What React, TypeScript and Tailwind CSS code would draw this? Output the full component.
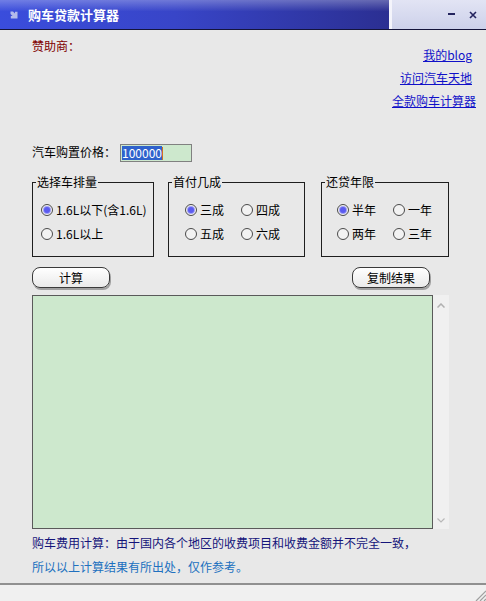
import React from 'react'

function Radio({ label, checked }: { label: string; checked?: boolean }) {
  return (
    <div className="flex h-[16px] items-center">
      <span className="flex h-[12px] w-[12px] shrink-0 items-center justify-center rounded-full border border-[#4a4a4a] bg-[#f2f2f2]">
        {checked && <span className="h-[6px] w-[6px] rounded-full bg-[#5b5bf0] ring-1 ring-[#a0a0f4]" />}
      </span>
      <span className="ml-[3px] whitespace-nowrap">{label}</span>
    </div>
  )
}

function Group({ title, className, children }: { title: string; className: string; children: React.ReactNode }) {
  return (
    <div className={`h-[75px] shrink-0 border border-[#1e1e1e] ${className}`}>
      <div className="-mt-[8px] ml-[3px] w-fit bg-[#e8e8e8] px-[1px] leading-[14px]">{title}</div>
      {children}
    </div>
  )
}

function Btn({ label }: { label: string }) {
  return (
    <button className="h-[21px] w-[78px] rounded-[8px] border border-[#3a3a3a] bg-gradient-to-b from-white to-[#eaeaea] leading-[18px] shadow-[1px_2px_0_#a0a0a0]">
      {label}
    </button>
  )
}

export default function App() {
  return (
    <div className="flex h-[601px] w-[486px] flex-col overflow-hidden bg-[#e8e8e8] font-['Noto_Sans_CJK_SC',sans-serif] text-[12px] leading-[16px] text-black">
      {/* title bar */}
      <div className="flex h-[30px] shrink-0 border-b border-[#14143a]">
        <div className="flex w-[389px] items-center bg-[linear-gradient(180deg,rgba(255,255,255,0.28)_0%,rgba(255,255,255,0)_40%),linear-gradient(90deg,#3a4ddc,#3845c8_45%,#2b2f92)]">
          <svg className="ml-[10px]" width="8" height="8" viewBox="0 0 8 8">
            <path d="M0.5 0.5 L3 0.5 L5 2.5 L5 0.8 L7.5 0.8 L7.5 7.5 L0.8 7.5 L0.8 5 L2.5 5 L0.5 3 Z" fill="#b4bbea" />
          </svg>
          <span className="ml-[10px] text-[13px] font-bold leading-[16px] text-white">购车贷款计算器</span>
        </div>
        <div className="flex flex-1 items-center justify-end border-l-[3px] border-[#f4f4fb] bg-gradient-to-b from-[#e2e4f4] to-[#cdd1ea] pr-[9px]">
          <svg width="8" height="3" viewBox="0 0 8 3" className="mr-[13px]">
            <rect x="0" y="0" width="7" height="2" fill="#24245e" />
          </svg>
          <svg width="8" height="8" viewBox="0 0 8 8">
            <path d="M1 1 L7 7 M7 1 L1 7" stroke="#24245e" strokeWidth="1.6" />
          </svg>
        </div>
      </div>

      {/* body */}
      <div className="flex flex-1 flex-col pl-[32px]">
        <div className="flex justify-between">
          <div className="pt-[8px] text-[#800000]">赞助商：</div>
          <div className="flex flex-col items-end gap-[7px] pt-[17px] text-[#1010c8] underline">
            <a className="mr-[14px]">我的blog</a>
            <a className="mr-[14px]">访问汽车天地</a>
            <a className="mr-[10px]">全款购车计算器</a>
          </div>
        </div>

        <div className="mt-[35px] flex h-[18px] items-center">
          <span className="pb-[2px]">汽车购置价格：</span>
          <div className="ml-[4px] flex h-[18px] w-[72px] items-center border border-[#808080] bg-[#cde8cd] pl-[1px]">
            <span className="bg-[#2f62cc] leading-[14px] text-white">100000</span>
            <span className="h-[13px] w-[1px] bg-[#d07020]" />
          </div>
        </div>

        <div className="mt-[20px] flex">
          <Group title="选择车排量" className="w-[122px]">
            <div className="mt-[13px] flex flex-col gap-[8px] pl-[8px]">
              <Radio label="1.6L以下(含1.6L)" checked />
              <Radio label="1.6L以上" />
            </div>
          </Group>
          <Group title="首付几成" className="ml-[14px] w-[137px]">
            <div className="mt-[13px] grid grid-cols-[56px_56px] gap-y-[8px] pl-[16px]">
              <Radio label="三成" checked />
              <Radio label="四成" />
              <Radio label="五成" />
              <Radio label="六成" />
            </div>
          </Group>
          <Group title="还贷年限" className="ml-[16px] w-[128px]">
            <div className="mt-[13px] grid grid-cols-[56px_56px] gap-y-[8px] pl-[15px]">
              <Radio label="半年" checked />
              <Radio label="一年" />
              <Radio label="两年" />
              <Radio label="三年" />
            </div>
          </Group>
        </div>

        <div className="mt-[10px] flex w-[398px] justify-between">
          <Btn label="计算" />
          <Btn label="复制结果" />
        </div>

        <div className="mt-[7px] flex h-[234px]">
          <div className="w-[401px] border border-[#5a5a5a] bg-[#cde8cd]" />
          <div className="flex w-[16px] flex-col items-center justify-between bg-[#f0f0f0] pt-[8px] pb-[6px]">
            <svg width="8" height="5" viewBox="0 0 8 5">
              <path d="M0.5 4.5 L4 1 L7.5 4.5" fill="none" stroke="#b0b0b0" strokeWidth="1.5" />
            </svg>
            <svg width="8" height="5" viewBox="0 0 8 5">
              <path d="M0.5 0.5 L4 4 L7.5 0.5" fill="none" stroke="#b8b8b8" strokeWidth="1.2" />
            </svg>
          </div>
        </div>

        <div className="mt-[6px] text-[#14147a]">购车费用计算：由于国内各个地区的收费项目和收费金额并不完全一致，</div>
        <div className="mt-[8px] text-[#2070bf]">所以以上计算结果有所出处，仅作参考。</div>
      </div>

      {/* status bar */}
      <div className="flex h-[18px] shrink-0 items-end justify-end border-t-2 border-[#909090] bg-[#f0f0f0]">
        <svg width="11" height="11" viewBox="0 0 11 11">
          <path d="M11 1 L1 11 M11 5 L5 11 M11 9 L9 11" stroke="#a0a0a0" strokeWidth="1.2" />
        </svg>
      </div>
    </div>
  )
}
